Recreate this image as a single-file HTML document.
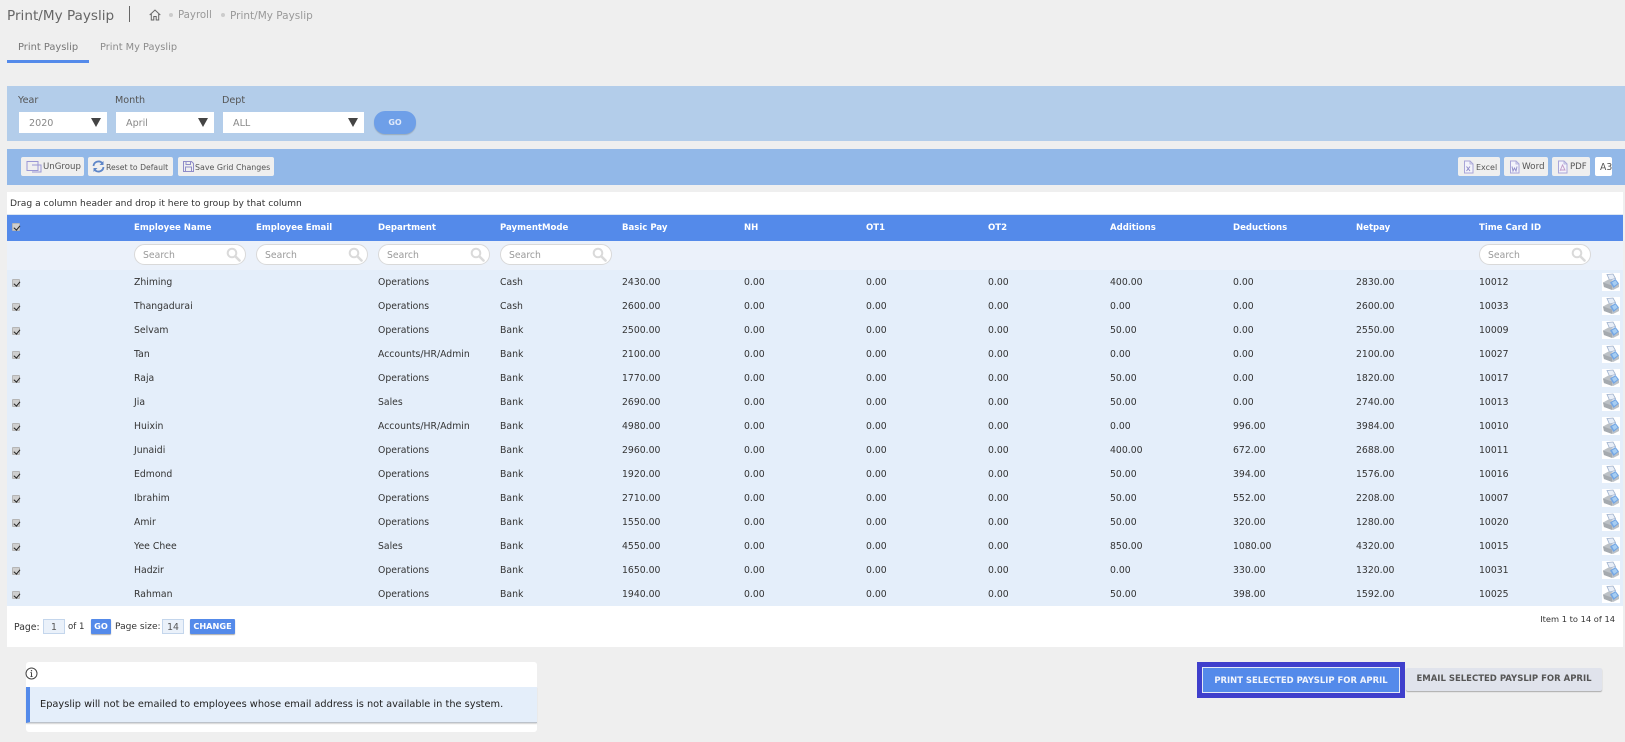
<!DOCTYPE html>
<html><head><meta charset="utf-8"><title>Print/My Payslip</title>
<style>
*{box-sizing:border-box}
html,body{margin:0;padding:0}
body{width:1625px;height:742px;background:#efefef;position:relative;overflow:hidden;font-family:"DejaVu Sans","Liberation Sans",sans-serif;font-size:9.3px;color:#333}
.p{position:absolute;white-space:nowrap}
.sel{position:absolute;top:112px;height:21px;background:#fff;color:#888;font-size:9.6px;line-height:24px;padding-left:10px}
.sel i{position:absolute;right:6px;top:6px;width:0;height:0;border-left:5px solid transparent;border-right:5px solid transparent;border-top:9px solid #444}
.tb{position:absolute;top:157px;height:19px;background:#efefef;border-radius:2px;color:#555;font-size:8.6px;line-height:21px;white-space:nowrap}
.tb svg{position:absolute;left:4px;top:3px}
.tb b{position:absolute;font-weight:normal;top:0}
.h{position:absolute;top:215px;height:26px;line-height:27px;color:#fff;font-weight:bold;font-size:8.55px;white-space:nowrap}
.s{position:absolute;top:244px;width:112px;height:21px;background:#fff;border:1px solid #d9d9d9;border-radius:11px;color:#999;font-size:9.3px;line-height:22px;padding-left:8px}
.s svg{position:absolute;right:4px;top:2px}
.r{position:absolute;left:7px;width:1616px;height:24px;background:#e4eefa;line-height:26px;color:#333}
.r span{position:absolute;top:0;white-space:nowrap}
.r span:nth-of-type(1){left:127px}.r span:nth-of-type(2){left:371px}.r span:nth-of-type(3){left:493px}
.r span:nth-of-type(4){left:615px}.r span:nth-of-type(5){left:737px}.r span:nth-of-type(6){left:859px}
.r span:nth-of-type(7){left:981px}.r span:nth-of-type(8){left:1103px}.r span:nth-of-type(9){left:1226px}
.r span:nth-of-type(10){left:1349px}.r span:nth-of-type(11){left:1472px}
.r svg{position:absolute;left:1595px;top:3px}
.c{position:absolute;width:8px;height:8px;background:#cfcfcf;border:1px solid #b5b5b5;border-radius:1px}
.c:after{content:"";position:absolute;left:1.5px;top:-.5px;width:2.5px;height:5px;border:solid #222;border-width:0 1.3px 1.3px 0;transform:rotate(40deg)}
.r .c{left:5px;top:9px}
.in{position:absolute;top:619px;height:15px;background:#eaf1fa;border:1px solid #c4d6ec;color:#555;text-align:center;line-height:15px;font-size:9.3px}
.bb{position:absolute;top:619px;height:15px;background:#548aea;color:#fff;font-weight:bold;font-size:8.2px;line-height:15px;text-align:center;border-radius:1px;box-shadow:0 1px 1px #aaa}
</style></head><body>
<svg width="0" height="0" style="position:absolute"><defs>
<symbol id="pr" viewBox="0 0 18 18"><rect width="18" height="18" fill="#fff"/><path d="M5 1.500 11 1l2.500 4.500-6 1.500z" fill="#e8eef7" stroke="#9db0cc" stroke-width=".8"/><path d="M1 9.500 6.500 6.500 13 8l4 3v3l-6 3-9-3z" fill="#bcc1c6"/><path d="M1 9.500 10 12.500v4.500L2 14z" fill="#a5aaaf"/><path d="M8 9.500 13.500 6 17 10.500 11.500 15z" fill="#74a6e4"/><path d="M10 9.500 13.500 7.500 15.500 10.500 12 13z" fill="#a6cdf2"/></symbol>
<symbol id="mg" viewBox="0 0 15 15"><circle cx="6" cy="6" r="4.300" fill="none" stroke="#dadada" stroke-width="2"/><path d="M9.500 9.500 13.500 13.500" stroke="#dadada" stroke-width="2.600" stroke-linecap="round"/></symbol>
<symbol id="fi" viewBox="0 0 13 14"><path d="M2.500 1h5.500l3 3v9h-8.500z" fill="#f3f3fb" stroke="#a9a6d8"/><path d="M8 1v3h3" fill="none" stroke="#a9a6d8" stroke-width=".8"/></symbol>
</defs></svg>

<div class="p" style="left:7px;top:7px;font-size:13.6px;line-height:18px;color:#666">Print/My Payslip</div>
<div style="position:absolute;left:129px;top:6px;width:1px;height:16px;background:#666"></div>
<svg style="position:absolute;left:149px;top:9px" width="12" height="12" viewBox="0 0 12 12"><path d="M.7 6 6 1l5.300 5M2.300 5v6h2.500V7.500h2.400V11h2.500V5" fill="none" stroke="#666" stroke-width="1"/></svg>
<div style="position:absolute;left:169px;top:13px;width:4px;height:4px;border-radius:2px;background:#ccc"></div>
<div class="p" style="left:178px;top:8px;font-size:10.2px;line-height:16px;color:#999">Payroll</div>
<div style="position:absolute;left:221px;top:13px;width:4px;height:4px;border-radius:2px;background:#ccc"></div>
<div class="p" style="left:230px;top:8px;font-size:10.5px;line-height:16px;color:#999">Print/My Payslip</div>

<div class="p" style="left:18px;top:40px;font-size:9.9px;line-height:16px;color:#777">Print Payslip</div>
<div class="p" style="left:100px;top:40px;font-size:9.8px;line-height:16px;color:#8c8c8c">Print My Payslip</div>
<div style="position:absolute;left:7px;top:60px;width:82px;height:3px;background:#548aea"></div>

<div style="position:absolute;left:7px;top:86px;width:1618px;height:55px;background:#b3cdea"></div>
<div class="p" style="left:18px;top:93px;font-size:9.6px;line-height:16px;color:#555">Year</div>
<div class="p" style="left:115px;top:93px;font-size:9.6px;line-height:16px;color:#555">Month</div>
<div class="p" style="left:222px;top:93px;font-size:9.6px;line-height:16px;color:#555">Dept</div>
<div class="sel" style="left:19px;width:88px">2020<i></i></div>
<div class="sel" style="left:116px;width:98px">April<i></i></div>
<div class="sel" style="left:223px;width:141px">ALL<i></i></div>
<div style="position:absolute;left:374px;top:111px;width:42px;height:23px;border-radius:11px;background:#6e9fe8;color:#dfe9fa;font-weight:bold;font-size:8px;line-height:23px;text-align:center;box-shadow:0 1px 1px #9ab">GO</div>

<div style="position:absolute;left:7px;top:149px;width:1618px;height:36px;background:#92b8e8"></div>
<div class="tb" style="left:21px;width:63px"><svg width="17" height="13" viewBox="0 0 17 13"><path d="M2 1.500h11v9H2zM7 5h9v7H7" fill="none" stroke="#9a97d4"/></svg><b style="left:22px">UnGroup</b></div>
<div class="tb" style="left:88px;width:85px"><svg width="13" height="13" viewBox="0 0 13 13"><path d="M1.500 6a5 5 0 0 1 9-2.500M11.500 7a5 5 0 0 1-9 2.500" fill="none" stroke="#5e86c8" stroke-width="1.800"/><path d="M11.500 1v4h-4zM1.500 12V8h4z" fill="#5e86c8"/></svg><b style="left:18px;font-size:7.7px">Reset to Default</b></div>
<div class="tb" style="left:178px;width:96px"><svg width="13" height="13" viewBox="0 0 13 13"><path d="M1.500 1.500h8l2 2v8h-10zM4 1.500v3h4.500v-3M3.500 11.500v-4.500h6v4.500" fill="none" stroke="#8f8cc8"/></svg><b style="left:17px;font-size:7.9px">Save Grid Changes</b></div>
<div class="tb" style="left:1458px;width:42px"><svg width="13" height="14" viewBox="0 0 13 14"><use href="#fi"/><path d="M4.500 6.500l3.500 4.500M8 6.500l-3.500 4.500" stroke="#8f8cc8"/></svg><b style="left:18px;font-size:8px">Excel</b></div>
<div class="tb" style="left:1504px;width:44px"><svg width="13" height="14" viewBox="0 0 13 14"><use href="#fi"/><path d="M4 6.500l1 4.500 1.500-3 1.500 3 1-4.500" fill="none" stroke="#8f8cc8" stroke-width=".9"/></svg><b style="left:18px;font-size:8.8px">Word</b></div>
<div class="tb" style="left:1552px;width:38px"><svg width="13" height="14" viewBox="0 0 13 14"><use href="#fi"/><path d="M4 11 6.500 5 9 10H5" fill="none" stroke="#c19ac8" stroke-width=".9"/></svg><b style="left:18px">PDF</b></div>
<div class="tb" style="left:1595px;width:17px;background:#fff;overflow:hidden"><b style="left:5px;font-size:9.3px">A3</b></div>

<div style="position:absolute;left:7px;top:192px;width:1616px;height:23px;background:#fff;border-bottom:1px solid #dbe6f3;color:#333;line-height:24px;padding-left:3px;font-size:9.15px">Drag a column header and drop it here to group by that column</div>
<div style="position:absolute;left:7px;top:215px;width:1616px;height:26px;background:#548aea"></div>
<div class="c" style="left:12px;top:223px"></div>
<div class="h" style="left:134px">Employee Name</div>
<div class="h" style="left:256px">Employee Email</div>
<div class="h" style="left:378px">Department</div>
<div class="h" style="left:500px">PaymentMode</div>
<div class="h" style="left:622px">Basic Pay</div>
<div class="h" style="left:744px">NH</div>
<div class="h" style="left:866px">OT1</div>
<div class="h" style="left:988px">OT2</div>
<div class="h" style="left:1110px">Additions</div>
<div class="h" style="left:1233px">Deductions</div>
<div class="h" style="left:1356px">Netpay</div>
<div class="h" style="left:1479px">Time Card ID</div>

<div style="position:absolute;left:7px;top:241px;width:1616px;height:29px;background:#ebf1fa"></div>
<div class="s" style="left:134px">Search<svg width="15" height="15"><use href="#mg"/></svg></div>
<div class="s" style="left:256px">Search<svg width="15" height="15"><use href="#mg"/></svg></div>
<div class="s" style="left:378px">Search<svg width="15" height="15"><use href="#mg"/></svg></div>
<div class="s" style="left:500px">Search<svg width="15" height="15"><use href="#mg"/></svg></div>
<div class="s" style="left:1479px">Search<svg width="15" height="15"><use href="#mg"/></svg></div>

<div class="r" style="top:270px"><div class="c"></div><span>Zhiming</span><span>Operations</span><span>Cash</span><span>2430.00</span><span>0.00</span><span>0.00</span><span>0.00</span><span>400.00</span><span>0.00</span><span>2830.00</span><span>10012</span><svg width="18" height="18"><use href="#pr"/></svg></div>
<div class="r" style="top:294px"><div class="c"></div><span>Thangadurai</span><span>Operations</span><span>Cash</span><span>2600.00</span><span>0.00</span><span>0.00</span><span>0.00</span><span>0.00</span><span>0.00</span><span>2600.00</span><span>10033</span><svg width="18" height="18"><use href="#pr"/></svg></div>
<div class="r" style="top:318px"><div class="c"></div><span>Selvam</span><span>Operations</span><span>Bank</span><span>2500.00</span><span>0.00</span><span>0.00</span><span>0.00</span><span>50.00</span><span>0.00</span><span>2550.00</span><span>10009</span><svg width="18" height="18"><use href="#pr"/></svg></div>
<div class="r" style="top:342px"><div class="c"></div><span>Tan</span><span>Accounts/HR/Admin</span><span>Bank</span><span>2100.00</span><span>0.00</span><span>0.00</span><span>0.00</span><span>0.00</span><span>0.00</span><span>2100.00</span><span>10027</span><svg width="18" height="18"><use href="#pr"/></svg></div>
<div class="r" style="top:366px"><div class="c"></div><span>Raja</span><span>Operations</span><span>Bank</span><span>1770.00</span><span>0.00</span><span>0.00</span><span>0.00</span><span>50.00</span><span>0.00</span><span>1820.00</span><span>10017</span><svg width="18" height="18"><use href="#pr"/></svg></div>
<div class="r" style="top:390px"><div class="c"></div><span>Jia</span><span>Sales</span><span>Bank</span><span>2690.00</span><span>0.00</span><span>0.00</span><span>0.00</span><span>50.00</span><span>0.00</span><span>2740.00</span><span>10013</span><svg width="18" height="18"><use href="#pr"/></svg></div>
<div class="r" style="top:414px"><div class="c"></div><span>Huixin</span><span>Accounts/HR/Admin</span><span>Bank</span><span>4980.00</span><span>0.00</span><span>0.00</span><span>0.00</span><span>0.00</span><span>996.00</span><span>3984.00</span><span>10010</span><svg width="18" height="18"><use href="#pr"/></svg></div>
<div class="r" style="top:438px"><div class="c"></div><span>Junaidi</span><span>Operations</span><span>Bank</span><span>2960.00</span><span>0.00</span><span>0.00</span><span>0.00</span><span>400.00</span><span>672.00</span><span>2688.00</span><span>10011</span><svg width="18" height="18"><use href="#pr"/></svg></div>
<div class="r" style="top:462px"><div class="c"></div><span>Edmond</span><span>Operations</span><span>Bank</span><span>1920.00</span><span>0.00</span><span>0.00</span><span>0.00</span><span>50.00</span><span>394.00</span><span>1576.00</span><span>10016</span><svg width="18" height="18"><use href="#pr"/></svg></div>
<div class="r" style="top:486px"><div class="c"></div><span>Ibrahim</span><span>Operations</span><span>Bank</span><span>2710.00</span><span>0.00</span><span>0.00</span><span>0.00</span><span>50.00</span><span>552.00</span><span>2208.00</span><span>10007</span><svg width="18" height="18"><use href="#pr"/></svg></div>
<div class="r" style="top:510px"><div class="c"></div><span>Amir</span><span>Operations</span><span>Bank</span><span>1550.00</span><span>0.00</span><span>0.00</span><span>0.00</span><span>50.00</span><span>320.00</span><span>1280.00</span><span>10020</span><svg width="18" height="18"><use href="#pr"/></svg></div>
<div class="r" style="top:534px"><div class="c"></div><span>Yee Chee</span><span>Sales</span><span>Bank</span><span>4550.00</span><span>0.00</span><span>0.00</span><span>0.00</span><span>850.00</span><span>1080.00</span><span>4320.00</span><span>10015</span><svg width="18" height="18"><use href="#pr"/></svg></div>
<div class="r" style="top:558px"><div class="c"></div><span>Hadzir</span><span>Operations</span><span>Bank</span><span>1650.00</span><span>0.00</span><span>0.00</span><span>0.00</span><span>0.00</span><span>330.00</span><span>1320.00</span><span>10031</span><svg width="18" height="18"><use href="#pr"/></svg></div>
<div class="r" style="top:582px"><div class="c"></div><span>Rahman</span><span>Operations</span><span>Bank</span><span>1940.00</span><span>0.00</span><span>0.00</span><span>0.00</span><span>50.00</span><span>398.00</span><span>1592.00</span><span>10025</span><svg width="18" height="18"><use href="#pr"/></svg></div>

<div style="position:absolute;left:7px;top:606px;width:1616px;height:41px;background:#fff"></div>
<div class="p" style="left:14px;top:620px;line-height:15px">Page:</div>
<div class="in" style="left:43px;width:22px">1</div>
<div class="p" style="left:68px;top:620px;line-height:15px;font-size:8.6px">of 1</div>
<div class="bb" style="left:91px;width:20px">GO</div>
<div class="p" style="left:115px;top:620px;line-height:15px;font-size:9.1px">Page size:</div>
<div class="in" style="left:162px;width:22px">14</div>
<div class="bb" style="left:190px;width:45px">CHANGE</div>
<div class="p" style="right:10px;top:612px;line-height:15px;font-size:8.3px">Item 1 to 14 of 14</div>

<div style="position:absolute;left:26px;top:662px;width:511px;height:70px;background:#fff;border-radius:3px"></div>
<svg style="position:absolute;left:25px;top:667px" width="13" height="13" viewBox="0 0 13 13"><circle cx="6.500" cy="6.500" r="5.500" fill="none" stroke="#444" stroke-width="1"/><path d="M6.500 5.500v4M5.500 9.500h2M5.500 5.500h1" stroke="#444" fill="none"/><circle cx="6.500" cy="3.700" r=".7" fill="#444"/></svg>
<div style="position:absolute;left:26px;top:687px;width:511px;height:36px;background:#e4eefa;border-left:4px solid #548aea;border-bottom:1px solid #bcc2ca;box-shadow:0 1px 1px #d5d5d5;line-height:36px;padding-left:10px;font-size:9.8px;color:#222;white-space:nowrap">Epayslip will not be emailed to employees whose email address is not available in the system.</div>

<div style="position:absolute;left:1197px;top:662px;width:208px;height:36px;background:#3f3fcc"></div>
<div style="position:absolute;left:1202px;top:667px;width:198px;height:26px;background:#548aea;border:1px solid #e4eaf6;color:#f2f5fc;font-weight:bold;font-size:8.45px;line-height:24px;text-align:center;white-space:nowrap">PRINT SELECTED PAYSLIP FOR APRIL</div>
<div style="position:absolute;left:1406px;top:668px;width:196px;height:23px;background:#e0e3ec;border-radius:2px;box-shadow:0 1px 1px #aaa;color:#555;font-weight:bold;font-size:8.5px;line-height:23px;text-align:center;white-space:nowrap">EMAIL SELECTED PAYSLIP FOR APRIL</div>
</body></html>
